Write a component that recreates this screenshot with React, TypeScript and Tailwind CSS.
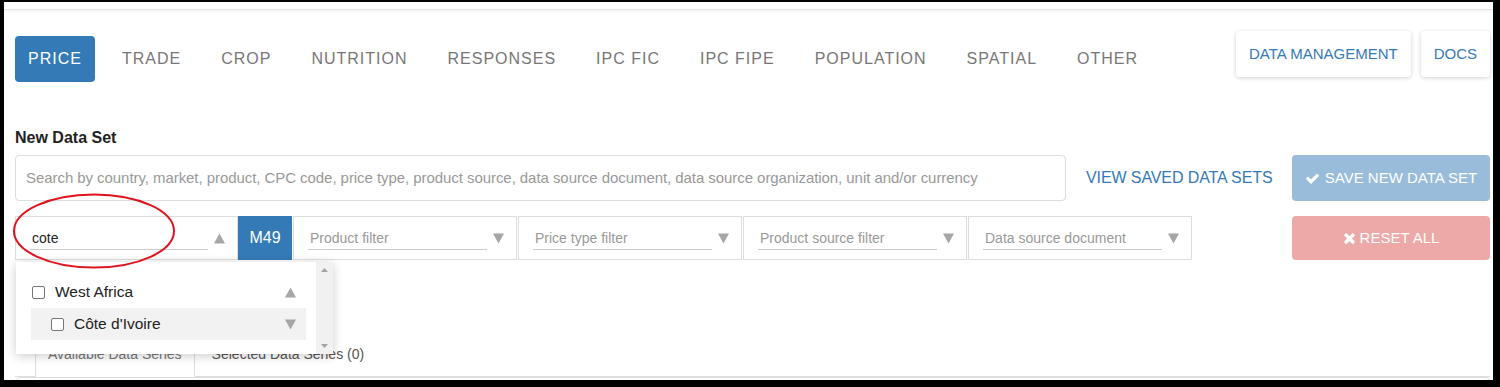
import React from "react";

const Tri = ({ up }: { up?: boolean }) => (
  <svg width="11" height="11" viewBox="0 0 11 11" className="shrink-0">
    {up ? <polygon points="0,10.5 11,10.5 5.5,0.5" fill="#a6a6a6" /> : <polygon points="0,0.5 11,0.5 5.5,10.5" fill="#a6a6a6" />}
  </svg>
);

const Check = () => (
  <svg width="15" height="15" viewBox="0 0 1792 1792" className="shrink-0">
    <path
      fill="#fff"
      d="M1671 566q0 40-28 68l-724 724-136 136q-28 28-68 28t-68-28l-136-136-362-362q-28-28-28-68t28-68l136-136q28-28 68-28t68 28l294 295 656-657q28-28 68-28t68 28l136 136q28 28 28 68z"
    />
  </svg>
);

const Times = () => (
  <svg width="13" height="16" viewBox="0 0 1408 1792" className="shrink-0">
    <path
      fill="#fff"
      d="M1298 1322q0 40-28 68l-136 136q-28 28-68 28t-68-28l-294-294-294 294q-28 28-68 28t-68-28l-136-136q-28-28-28-68t28-68l294-294-294-294q-28-28-28-68t28-68l136-136q28-28 68-28t68 28l294 294 294-294q28-28 68-28t68 28l136 136q28 28 28 68t-28 68l-294 294 294 294q28 28 28 68z"
    />
  </svg>
);

const FilterBox = ({ label }: { label: string }) => (
  <div className="w-[224px] h-full border border-[#dddddd] flex items-center pl-[14px]">
    <div className="w-[179px] h-[24px] border-b border-[#cccccc] pl-[2px] text-[14px] leading-[24px] text-[#999999] whitespace-nowrap overflow-hidden">
      {label}
    </div>
    <div className="ml-[6px]">
      <Tri />
    </div>
  </div>
);

const Box = () => (
  <span className="inline-block w-[13px] h-[13px] rounded-[2px] border border-[#767676] bg-white shrink-0" />
);

export default function App() {
  const navs = ["TRADE", "CROP", "NUTRITION", "RESPONSES", "IPC FIC", "IPC FIPE", "POPULATION", "SPATIAL", "OTHER"];
  return (
    <div className="w-[1500px] h-[387px] bg-black pt-[2px] pl-[4px] pr-[7px] pb-[7px] font-['Liberation_Sans',Arial,sans-serif]">
      <div className="relative w-full h-full bg-white overflow-hidden">
        <div className="h-[8px] border-b border-[#e4e4e4] shadow-[0_1px_3px_rgba(0,0,0,0.07)]" />
        <div className="pl-[11px] pr-[3px]">
          {/* nav row */}
          <div className="flex justify-between items-start">
            <nav className="flex gap-[14px] mt-[26px]">
              <div className="h-[46px] px-[13px] flex items-center rounded-[4px] bg-[#337ab7] text-white text-[16px] tracking-[1px]">
                PRICE
              </div>
              {navs.map((n) => (
                <div key={n} className="h-[46px] px-[13px] flex items-center text-[#777777] text-[16px] tracking-[1px] whitespace-nowrap">
                  {n}
                </div>
              ))}
            </nav>
            <div className="flex gap-[10px] mt-[21px]">
              <div className="h-[46px] px-[13px] flex items-center rounded-[4px] bg-white text-[#337ab7] text-[15px] shadow-[0_1px_4px_rgba(0,0,0,0.18)] whitespace-nowrap">
                DATA MANAGEMENT
              </div>
              <div className="h-[46px] px-[13px] flex items-center rounded-[4px] bg-white text-[#337ab7] text-[15px] shadow-[0_1px_4px_rgba(0,0,0,0.18)]">
                DOCS
              </div>
            </div>
          </div>

          <div className="mt-[46px] text-[16px] leading-[20px] font-bold text-[#222222]">New Data Set</div>

          {/* search row */}
          <div className="mt-[7px] flex items-center">
            <div className="w-[1051px] h-[46px] border border-[#dddddd] rounded-[4px] flex items-center pl-[10px] text-[15px] text-[#999999] whitespace-nowrap overflow-hidden tracking-[-0.06px]">
              Search by country, market, product, CPC code, price type, product source, data source document, data source organization, unit and/or currency
            </div>
            <div className="ml-[20px] text-[16px] tracking-[-0.1px] text-[#337ab7] whitespace-nowrap">VIEW SAVED DATA SETS</div>
            <div className="ml-auto w-[198px] h-[46px] rounded-[4px] bg-[#99bcdb] flex items-center justify-center gap-[5px] text-white text-[15px] whitespace-nowrap">
              <Check />
              SAVE NEW DATA SET
            </div>
          </div>

          {/* filter row */}
          <div className="mt-[15px] h-[44px] flex">
            <div className="w-[223px] h-full border border-[#dddddd] flex items-center pl-[14px]">
              <div className="w-[178px] h-[24px] border-b border-[#cccccc] pl-[2px] text-[14px] leading-[24px] text-[#222222]">cote</div>
              <div className="ml-[6px]">
                <Tri up />
              </div>
            </div>
            <div className="w-[54px] h-full bg-[#337ab7] text-white text-[16px] flex items-center justify-center">M49</div>
            <div className="ml-[1px] flex gap-[1px] h-full">
              <FilterBox label="Product filter" />
              <FilterBox label="Price type filter" />
              <FilterBox label="Product source filter" />
              <FilterBox label="Data source document" />
            </div>
            <div className="ml-auto w-[198px] h-full rounded-[4px] bg-[#eca9a7] flex items-center justify-center gap-[4px] text-white text-[15px] whitespace-nowrap">
              <Times />
              RESET ALL
            </div>
          </div>

          {/* tabs */}
          <div className="mt-[75px] pl-[20px] flex border-b border-[#dddddd]">
            <div className="-mb-[1px] border border-[#dddddd] border-b-white rounded-t-[4px] px-[12px] pt-[8px] pb-[12px] leading-[20px] text-[14px] text-[#777777] bg-white">
              Available Data Series
            </div>
            <div className="ml-[2px] px-[15px] pt-[9px] pb-[12px] leading-[20px] text-[14px] text-[#555555]">Selected Data Series (0)</div>
          </div>
          <div className="ml-[1px] h-[20px] border border-[#dddddd] rounded-[4px]" />
        </div>

        {/* dropdown */}
        <div className="absolute left-[12px] top-[260px] w-[317px] h-[92px] bg-white shadow-[0_2px_10px_rgba(0,0,0,0.2)] flex z-10">
          <div className="flex-1 pl-[15px] pr-[10px] pt-[14px]">
            <div className="h-[32px] flex items-center pl-[1px] pr-[10px]">
              <Box />
              <span className="ml-[10px] text-[15.5px] text-[#222222]">West Africa</span>
              <span className="ml-auto">
                <Tri up />
              </span>
            </div>
            <div className="h-[32px] flex items-center pl-[20px] pr-[10px] bg-[#f2f2f2]">
              <Box />
              <span className="ml-[10px] text-[15.5px] text-[#222222]">Côte d'Ivoire</span>
              <span className="ml-auto">
                <Tri />
              </span>
            </div>
          </div>
          <div className="w-[17px] h-full bg-[#f1f1f1] flex flex-col items-center justify-between py-[6px]">
            <svg width="7" height="4" viewBox="0 0 7 4">
              <polygon points="0,4 7,4 3.5,0" fill="#a3a3a3" />
            </svg>
            <svg width="7" height="4" viewBox="0 0 7 4">
              <polygon points="0,0 7,0 3.5,4" fill="#a3a3a3" />
            </svg>
          </div>
        </div>

        {/* red annotation ellipse */}
        <svg className="absolute left-[7px] top-[190px] z-20 pointer-events-none" width="166" height="78" viewBox="0 0 166 78">
          <ellipse cx="83" cy="39" rx="80" ry="36.5" fill="none" stroke="#e0141e" strokeWidth="2" />
        </svg>
      </div>
    </div>
  );
}
